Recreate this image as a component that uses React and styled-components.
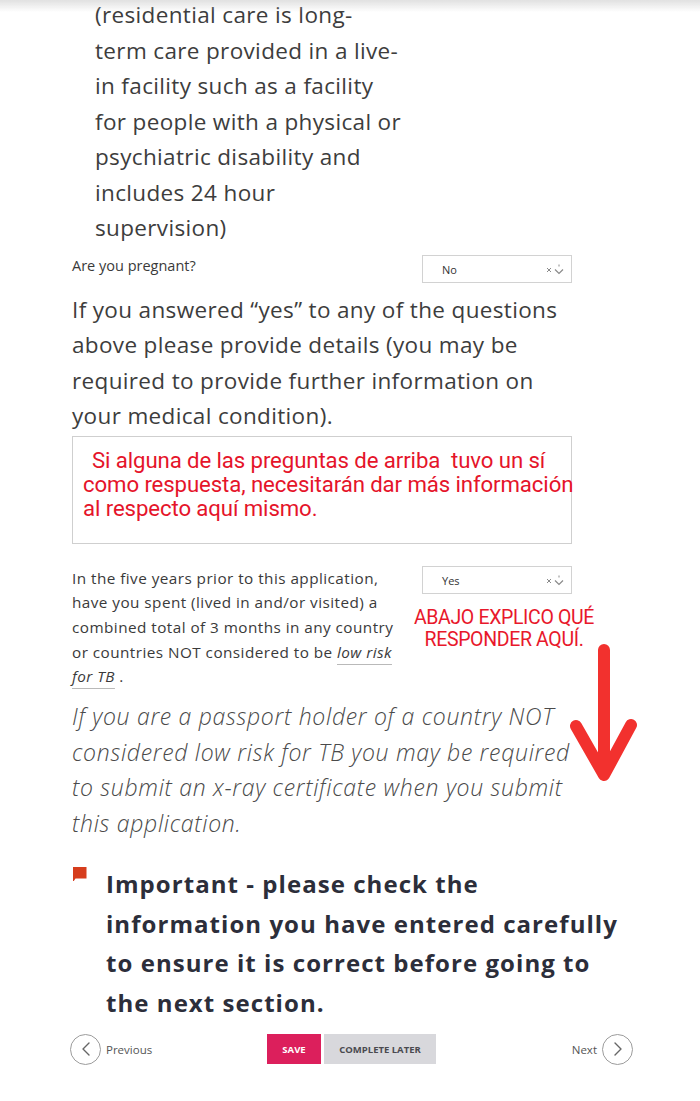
import React from 'react';
import styled, {createGlobalStyle} from 'styled-components';

const GlobalStyle = createGlobalStyle`
  html, body {
    margin: 0;
    padding: 0;
    background: #ffffff;
  }
  body {
    font-family: "Open Sans", Lato, sans-serif;
    color: #3d3d3d;
  }
`;

// Soft grey shade that the phone screenshot has along its top edge.
const TopShade = styled.div`
  position: fixed;
  top: 0;
  left: 0;
  right: 0;
  height: 12px;
  background: linear-gradient(to bottom, rgba(200, 200, 200, 0.55), rgba(255, 255, 255, 0));
  pointer-events: none;
  z-index: 5;
`;

const Page = styled.main`
  position: relative;
  width: 700px;
  box-sizing: border-box;
  padding: 0 128px 36px 72px;
`;

const Paragraph = styled.p`
  margin: ${(p) => p.$margin || '0'};
  font-size: ${(p) => p.$size || 22.5}px;
  line-height: ${(p) => p.$lh || 35.5}px;
  letter-spacing: ${(p) => p.$ls ?? 0.35}px;
  font-style: ${(p) => (p.$italic ? 'italic' : 'normal')};
  font-weight: ${(p) => p.$weight || 400};
  color: ${(p) => p.$color || '#3d3d3d'};
  white-space: nowrap;
`;

const QuestionRow = styled.div`
  display: grid;
  grid-template-columns: 350px 150px;
  align-items: start;
  margin-top: ${(p) => p.$top}px;
`;

const Label = styled.div`
  font-size: ${(p) => p.$size || 14.5}px;
  line-height: ${(p) => p.$lh || 24}px;
  letter-spacing: ${(p) => p.$ls || 0}px;
  color: #3a3a3a;
  margin-top: ${(p) => p.$pad || 0}px;
  white-space: nowrap;
`;

const Select = styled.div`
  height: 28px;
  box-sizing: border-box;
  border: 1px solid #d2d2d2;
  display: flex;
  align-items: center;
  justify-content: space-between;
  padding: 2px 6px 0 19px;
  font-size: 11px;
  color: #333;
`;

const SelectIcons = styled.span`
  display: flex;
  align-items: center;
  gap: 1px;
`;

const DottedLink = styled.span`
  font-style: italic;
  text-decoration: underline;
  text-decoration-color: #b9b9b9;
  text-underline-offset: 6px;
  text-decoration-thickness: 1px;
`;

const AnswerBox = styled.div`
  margin-top: 2px;
  height: 108px;
  box-sizing: border-box;
  border: 1px solid #cfcfcf;
  padding: 11px 10px;
  font-family: Roboto, "Liberation Sans", sans-serif;
  font-size: 22.2px;
  line-height: 24px;
  letter-spacing: -0.1px;
  color: #e5142a;
  white-space: nowrap;
`;

const FirstLine = styled.span`
  display: block;
  padding-left: 9px;
`;

const Annotation = styled.div`
  width: 200px;
  margin: 13px 0 0 -18px;
  text-align: center;
  font-family: Roboto, "Liberation Sans", sans-serif;
  font-size: 19.5px;
  line-height: 22px;
  letter-spacing: -0.35px;
  color: #e8182b;
  white-space: nowrap;
`;

const Arrow = styled.svg`
  position: absolute;
  left: 565px;
  top: 645px;
  overflow: visible;
`;

const Important = styled.div`
  display: flex;
  align-items: flex-start;
  margin-top: 23px;
`;

const FlagSlot = styled.div`
  width: 34px;
  flex: none;
  padding: 1px 0 0 1px;
  box-sizing: border-box;
`;

const ImportantText = styled.p`
  margin: 0;
  font-weight: 700;
  font-size: 24px;
  line-height: 39.7px;
  letter-spacing: 1.05px;
  color: #2c2e3a;
  white-space: nowrap;
`;

const Footer = styled.nav`
  display: grid;
  grid-template-columns: 1fr auto 1fr;
  align-items: center;
  width: 563px;
  margin: 11px 0 0 -2px;
`;

const NavLink = styled.a`
  display: flex;
  align-items: center;
  gap: 5px;
  justify-self: ${(p) => (p.$end ? 'end' : 'start')};
  font-size: 11.5px;
  color: #555;
  cursor: pointer;
`;

const Circle = styled.span`
  width: 31px;
  height: 31px;
  box-sizing: border-box;
  border: 1px solid #9c9c9c;
  border-radius: 50%;
  display: flex;
  align-items: center;
  justify-content: center;
`;

const Buttons = styled.div`
  display: flex;
  gap: 3px;
`;

const Button = styled.button`
  height: 30px;
  width: ${(p) => p.$w}px;
  border: 0;
  padding: 0;
  font-family: "Open Sans", sans-serif;
  font-weight: 700;
  font-size: 9.5px;
  background: ${(p) => (p.$primary ? '#dc1f5c' : '#d8d8dc')};
  color: ${(p) => (p.$primary ? '#ffffff' : '#4a4a4f')};
  cursor: pointer;
`;

function SelectBox({value}) {
  return (
    <Select>
      <span>{value}</span>
      <SelectIcons>
        <svg width="6" height="6" viewBox="0 0 6 6">
          <path d="M1 1 L5 5 M5 1 L1 5" stroke="#8a8a8a" strokeWidth="1" />
        </svg>
        <svg width="12" height="12" viewBox="0 0 12 12">
          <path d="M6 0.5 V2.5" stroke="#8a8a8a" strokeWidth="1" />
          <path d="M2 5.5 L6 9.5 L10 5.5" fill="none" stroke="#8a8a8a" strokeWidth="1.2" />
        </svg>
      </SelectIcons>
    </Select>
  );
}

function Chevron({dir}) {
  const d = dir === 'left' ? 'M9 2 L3 8 L9 14' : 'M3 2 L9 8 L3 14';
  return (
    <svg width="12" height="16" viewBox="0 0 12 16">
      <path d={d} fill="none" stroke="#666" strokeWidth="1.4" strokeLinecap="round" strokeLinejoin="round" />
    </svg>
  );
}

export default function App() {
  return (
    <>
      <GlobalStyle />
      <TopShade />
      <Page>
        <Paragraph $margin="-3px 0 0 23px">
          (residential care is long-<br />
          term care provided in a live-<br />
          in facility such as a facility<br />
          for people with a physical or<br />
          psychiatric disability and<br />
          includes 24 hour<br />
          supervision)
        </Paragraph>

        <QuestionRow $top={9}>
          <Label $pad={-1}>Are you pregnant?</Label>
          <SelectBox value="No" />
        </QuestionRow>

        <Paragraph $margin="9px 0 0 0">
          If you answered “yes” to any of the questions<br />
          above please provide details (you may be<br />
          required to provide further information on<br />
          your medical condition).
        </Paragraph>

        <AnswerBox>
          <FirstLine>Si alguna de las preguntas de arriba&nbsp; tuvo un sí</FirstLine>
          como respuesta, necesitarán dar más información<br />
          al respecto aquí mismo.
        </AnswerBox>

        <QuestionRow $top={22}>
          <Label $size={15.3} $lh={24.7} $ls={0.45}>
            In the five years prior to this application,<br />
            have you spent (lived in and/or visited) a<br />
            combined total of 3 months in any country<br />
            or countries NOT considered to be <DottedLink>low risk<br />
            for TB</DottedLink> .
          </Label>
          <div>
            <SelectBox value="Yes" />
            <Annotation>
              ABAJO EXPLICO QUÉ<br />
              RESPONDER AQUÍ.
            </Annotation>
          </div>
        </QuestionRow>

        <Paragraph $margin="10px 0 0 0" $size={23} $italic $weight={300} $color="#4a4a4a" $ls={0.7}>
          If you are a passport holder of a country NOT<br />
          considered low risk for TB you may be required<br />
          to submit an x-ray certificate when you submit<br />
          this application.
        </Paragraph>

        <Arrow width="75" height="145" viewBox="0 0 75 145">
          <path
            d="M39 8 L39 130 M11 84 L39 133 L66 83"
            fill="none"
            stroke="#f2312e"
            strokeWidth="12"
            strokeLinecap="round"
            strokeLinejoin="round"
          />
        </Arrow>

        <Important>
          <FlagSlot>
            <svg width="14" height="15" viewBox="0 0 14 15">
              <path d="M0 0 H13.5 V11.5 H2.5 L0.8 14 L0 14 Z" fill="#d63d1d" />
            </svg>
          </FlagSlot>
          <ImportantText>
            Important - please check the<br />
            information you have entered carefully<br />
            to ensure it is correct before going to<br />
            the next section.
          </ImportantText>
        </Important>

        <Footer>
          <NavLink>
            <Circle><Chevron dir="left" /></Circle>
            Previous
          </NavLink>
          <Buttons>
            <Button $primary $w={54}>SAVE</Button>
            <Button $w={112}>COMPLETE LATER</Button>
          </Buttons>
          <NavLink $end>
            Next
            <Circle><Chevron dir="right" /></Circle>
          </NavLink>
        </Footer>
      </Page>
    </>
  );
}
